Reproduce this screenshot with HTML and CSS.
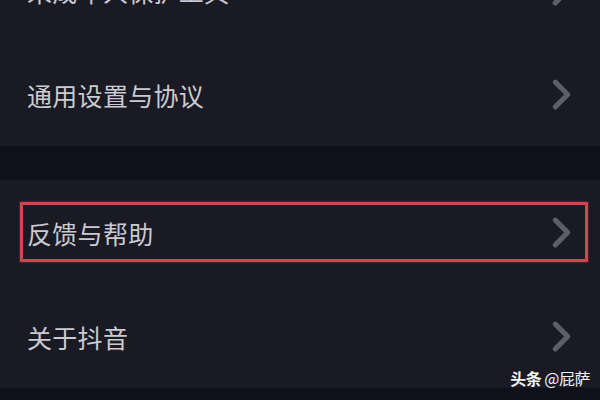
FILE: index.html
```html
<!DOCTYPE html>
<html lang="zh-CN">

<head>
    <meta charset="UTF-8">
    <meta name="viewport" content="width=device-width, initial-scale=1.0">
    <title>设置</title>
    <link rel="stylesheet" href="styles.css">
</head>

<body>
    <!-- First settings group (scrolled, top row cut off) -->
    <div class="group group-top">
        <div class="row">
            <span class="label">未成年人保护工具</span>
            <svg class="chevron" viewBox="0 0 20 32"><path d="M4 4 L16 16 L4 28" /></svg>
        </div>
        <div class="row">
            <span class="label">通用设置与协议</span>
            <svg class="chevron" viewBox="0 0 20 32"><path d="M4 4 L16 16 L4 28" /></svg>
        </div>
    </div>

    <!-- Second settings group -->
    <div class="group">
        <div class="row">
            <span class="label">反馈与帮助</span>
            <svg class="chevron" viewBox="0 0 20 32"><path d="M4 4 L16 16 L4 28" /></svg>
            <div class="highlight"></div>
        </div>
        <div class="row">
            <span class="label">关于抖音</span>
            <svg class="chevron" viewBox="0 0 20 32"><path d="M4 4 L16 16 L4 28" /></svg>
        </div>
    </div>

    <!-- Watermark -->
    <div class="watermark"><b>头条</b> @屁萨</div>
</body>

</html>
```

FILE: styles.css
```css
body {
    margin: 0;
    background-color: #0f101a; /* dark separator colour */
    font-family: "Noto Sans CJK SC", "Noto Sans", sans-serif;
    color: #cacad0;
    height: 400px;
    overflow: hidden;
    position: relative;
}

.group {
    background-color: #191a24;
}

.group-top {
    margin-top: -62px;
    margin-bottom: 34px;
}

.row {
    position: relative;
    height: 104px;
    padding: 2px 28px 0 27px;
    box-sizing: border-box;
    display: flex;
    align-items: center;
    justify-content: space-between;
}

.label {
    font-size: 25px;
    letter-spacing: 0.3px;
}

.chevron {
    width: 21px;
    height: 33px;
    margin-top: -2px;
}

.chevron path {
    fill: none;
    stroke: #5e5e67;
    stroke-width: 5;
    stroke-linecap: round;
    stroke-linejoin: round;
}

/* red annotation box */
.highlight {
    position: absolute;
    left: 20px;
    right: 12px;
    top: 22px;
    bottom: 22px;
    border: 3px solid #cf4650;
    box-shadow: 0 0 2px rgba(207, 70, 80, 0.6);
}

.watermark {
    position: absolute;
    right: 10px;
    bottom: 10px;
    font-size: 16px;
    color: #f2f2f2;
    letter-spacing: -0.5px;
}
```
